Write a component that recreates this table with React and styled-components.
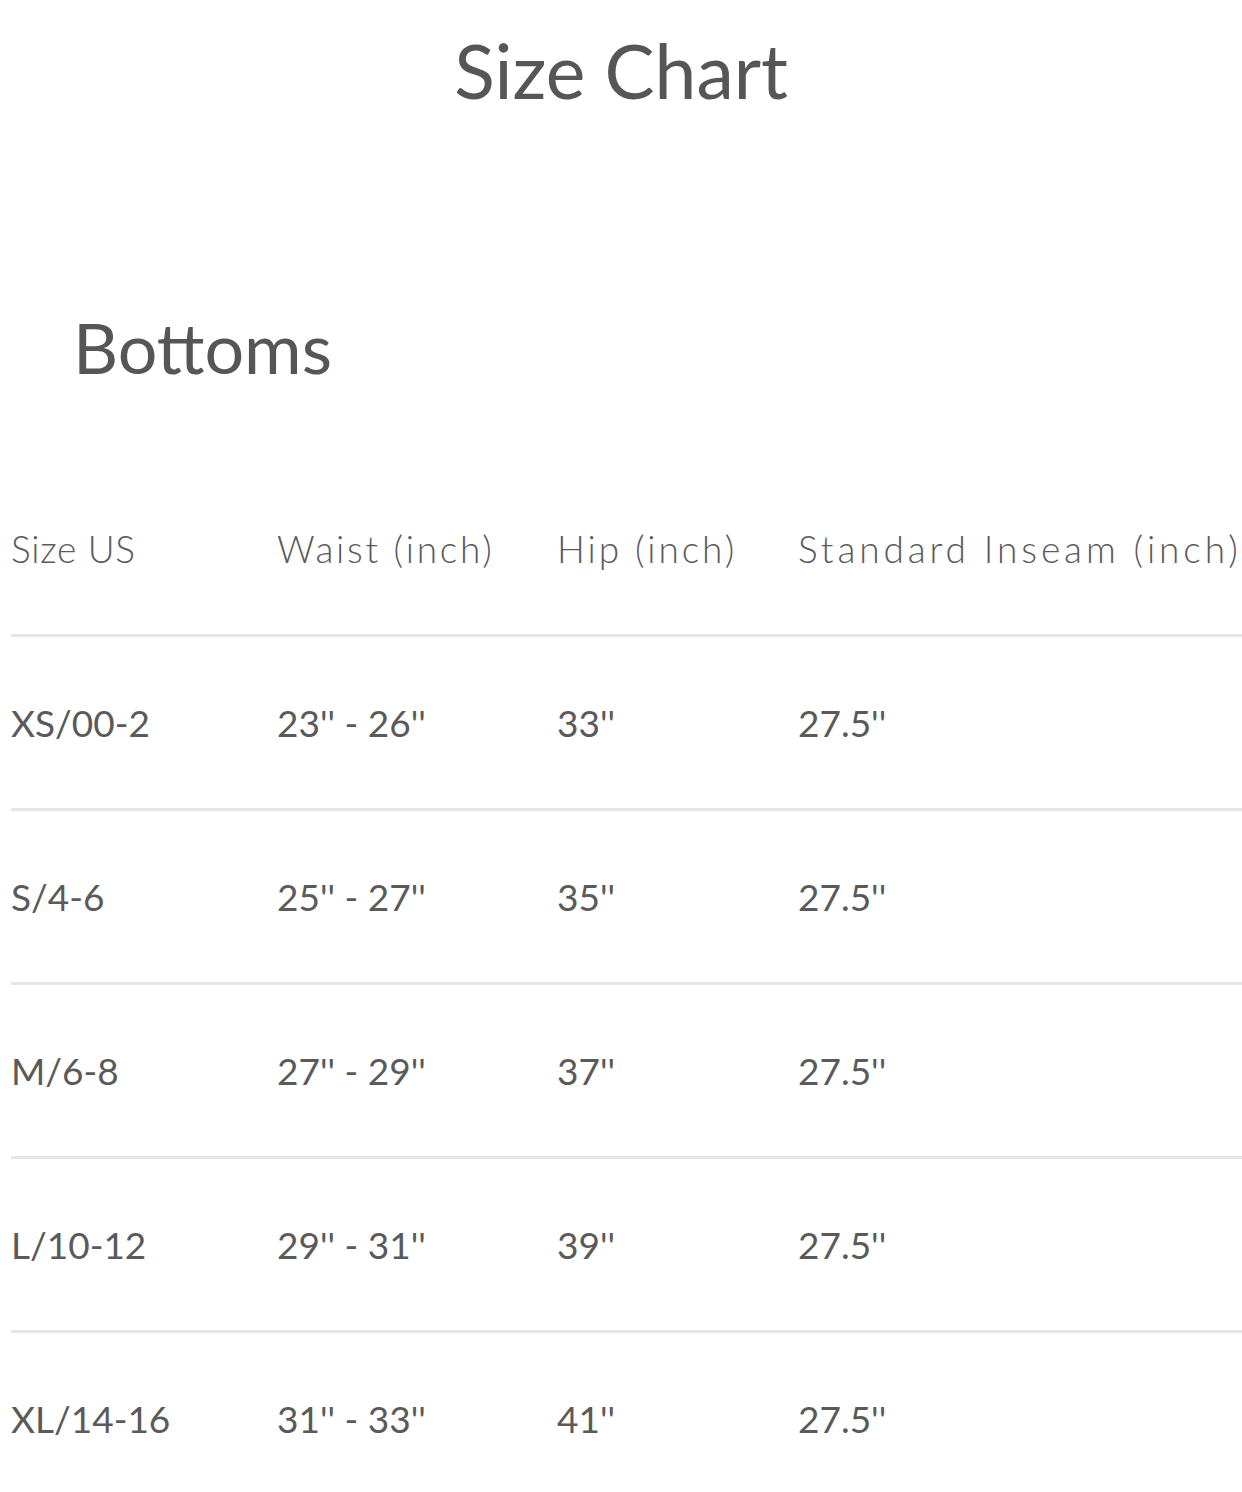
import styled, { createGlobalStyle } from "styled-components";

const GlobalStyle = createGlobalStyle`
  body {
    margin: 0;
    background: #fff;
    font-family: "Lato", "Open Sans", sans-serif;
    color: #595959;
  }
`;

const headers = [
  { label: "Size US", spacing: 0.7 },
  { label: "Waist (inch)", spacing: 2.7 },
  { label: "Hip (inch)", spacing: 2.9 },
  { label: "Standard Inseam (inch)", spacing: 3.9 },
];

const rows = [
  ["XS/00-2", "23'' - 26''", "33''", "27.5''"],
  ["S/4-6", "25'' - 27''", "35''", "27.5''"],
  ["M/6-8", "27'' - 29''", "37''", "27.5''"],
  ["L/10-12", "29'' - 31''", "39''", "27.5''"],
  ["XL/14-16", "31'' - 33''", "41''", "27.5''"],
];

const App = () => {
  return (
    <>
      <GlobalStyle />
      <Page>
        <Title>Size Chart</Title>
        <Section>Bottoms</Section>
        <Table>
          <colgroup>
            <col style={{ width: 266 }} />
            <col style={{ width: 280 }} />
            <col style={{ width: 241 }} />
            <col />
          </colgroup>
          <thead>
            <tr>
              {headers.map((h) => (
                <Head key={h.label} $spacing={h.spacing}>
                  {h.label}
                </Head>
              ))}
            </tr>
          </thead>
          <tbody>
            {rows.map((r, i) => (
              <Row key={i} $last={i === rows.length - 1}>
                {r.map((c, j) => (
                  <Cell key={j}>{c}</Cell>
                ))}
              </Row>
            ))}
          </tbody>
        </Table>
      </Page>
    </>
  );
};

const Page = styled.div`
  width: 1242px;
  overflow: hidden;
`;

const Title = styled.h1`
  margin: 0;
  height: 140px;
  line-height: 140px;
  text-align: center;
  font-weight: 400;
  font-size: 75px;
  color: #565656;
`;

const Section = styled.h2`
  margin: 157px 0 66px 73px;
  height: 100px;
  line-height: 100px;
  font-weight: 400;
  font-size: 70px;
  color: #565656;
`;

const Table = styled.table`
  margin-left: 11px;
  width: 1231px;
  border-collapse: collapse;
  table-layout: fixed;
`;

const Head = styled.th`
  height: 171px;
  padding: 0;
  text-align: left;
  font-weight: 300;
  font-size: 37px;
  letter-spacing: ${(p) => p.$spacing}px;
  white-space: nowrap;
  color: #5a5a5a;
  border-bottom: 3px solid #e6e6e6;
`;

const Row = styled.tr`
  border-bottom: ${(p) => (p.$last ? "none" : "3px solid #e6e6e6")};
`;

const Cell = styled.td`
  height: 171px;
  padding: 0;
  font-size: 37px;
  white-space: nowrap;
  color: #5a5a5a;
`;

export default App;
